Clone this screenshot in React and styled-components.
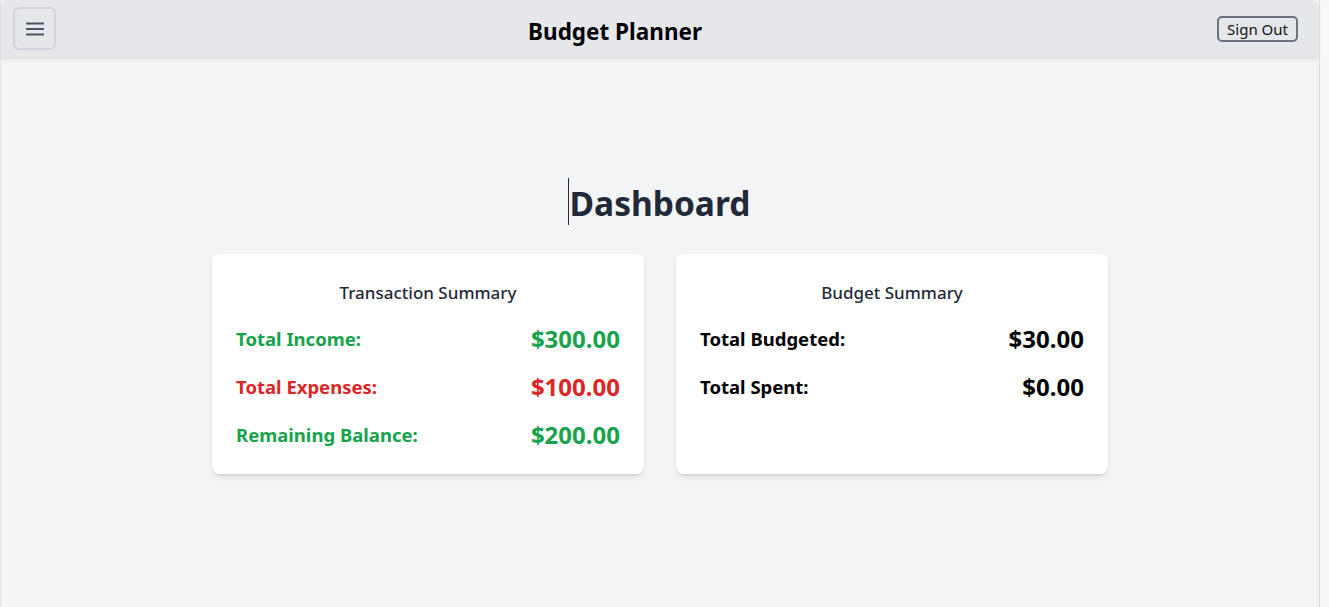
import styled, { createGlobalStyle } from "styled-components"

const GlobalStyle = createGlobalStyle`
    * {
        box-sizing: border-box;
    }
    body {
        margin: 0;
        background-color: #f8f8f8;
        font-family: "Noto Sans", "Open Sans", sans-serif;
    }
`

const transactionRows = [
    { label: "Total Income:", value: "$300.00", color: "#16a34a" },
    { label: "Total Expenses:", value: "$100.00", color: "#dc2626" },
    { label: "Remaining Balance:", value: "$200.00", color: "#16a34a" },
]

const budgetRows = [
    { label: "Total Budgeted:", value: "$30.00", color: "#000000" },
    { label: "Total Spent:", value: "$0.00", color: "#000000" },
]

function Card({ title, rows }) {
    return (
        <Panel>
            <PanelTitle>{title}</PanelTitle>
            <Rows>
                {rows.map(row => (
                    <Row key={row.label} color={row.color}>
                        <Label>{row.label}</Label>
                        <Value>{row.value}</Value>
                    </Row>
                ))}
            </Rows>
        </Panel>
    )
}

export default function App() {
    return (
        <>
            <GlobalStyle />
            <Frame>
                <Header>
                    <MenuButton aria-label="menu">
                        <svg width="18" height="14" viewBox="0 0 18 14">
                            <path d="M0 1.5h18M0 7h18M0 12.5h18" stroke="#4b5563" strokeWidth="2" />
                        </svg>
                    </MenuButton>
                    <Title>Budget Planner</Title>
                    <SignOut>Sign Out</SignOut>
                </Header>
                <Main>
                    <Heading>Dashboard</Heading>
                    <Cards>
                        <Card title="Transaction Summary" rows={transactionRows} />
                        <Card title="Budget Summary" rows={budgetRows} />
                    </Cards>
                </Main>
            </Frame>
        </>
    )
}

const Frame = styled.div`
    width: 1320px;
    height: 607px;
    background-color: #f3f4f6;
    border-left: 1px solid #e2e3e6;
    border-right: 1px solid #dedfe1;
    display: flex;
    flex-direction: column;
`

const Header = styled.header`
    height: 57px;
    display: flex;
    align-items: center;
    padding: 0 20px 0 12px;
    margin-right: 1px;
    background-color: #e5e7eb;
    border-radius: 8px 8px 0 0;
    box-shadow: 0 2px 4px rgba(0, 0, 0, 0.1);
    position: relative;
    z-index: 1;
`

const MenuButton = styled.button`
    width: 43px;
    height: 43px;
    display: flex;
    align-items: center;
    justify-content: center;
    background-color: #e5e7eb;
    border: 2px solid #d1d5db;
    border-radius: 6px;
    padding: 0;
`

const Title = styled.h1`
    flex: 1;
    margin: 5px 43px 0 0;
    text-align: center;
    font-size: 22.5px;
    font-weight: 700;
    color: #000000;
`

const SignOut = styled.button`
    height: 26px;
    padding: 0 8px;
    font-family: inherit;
    font-size: 15px;
    color: #111111;
    background-color: #e5e7eb;
    border: 2px solid #6b7280;
    border-radius: 5px;
`

const Main = styled.main`
    display: flex;
    flex-direction: column;
    align-items: center;
    padding-top: 122px;
`

const Heading = styled.h2`
    position: relative;
    margin: 0 0 27px;
    font-size: 33.5px;
    line-height: 48px;
    font-weight: 700;
    color: #1f2937;
    &::before {
        content: "";
        position: absolute;
        left: -2px;
        top: -1px;
        width: 1px;
        height: 47px;
        background-color: #1f2937;
    }
`

const Cards = styled.div`
    width: 896px;
    display: grid;
    grid-template-columns: 1fr 1fr;
    gap: 32px;
`

const Panel = styled.div`
    background-color: #ffffff;
    border-radius: 8px;
    padding: 25px 24px 24px;
    box-shadow: 0 4px 6px -1px rgba(0, 0, 0, 0.1), 0 2px 4px -2px rgba(0, 0, 0, 0.1);
`

const PanelTitle = styled.h3`
    margin: 0 0 15px;
    text-align: center;
    font-size: 17px;
    line-height: 28px;
    font-weight: 500;
    color: #1f2937;
`

const Rows = styled.div`
    display: flex;
    flex-direction: column;
    gap: 16px;
`

const Row = styled.div`
    display: flex;
    justify-content: space-between;
    align-items: center;
    height: 32px;
    color: ${props => props.color};
`

const Label = styled.span`
    font-size: 18.5px;
    font-weight: 700;
`

const Value = styled.span`
    font-size: 24px;
    font-weight: 700;
`
